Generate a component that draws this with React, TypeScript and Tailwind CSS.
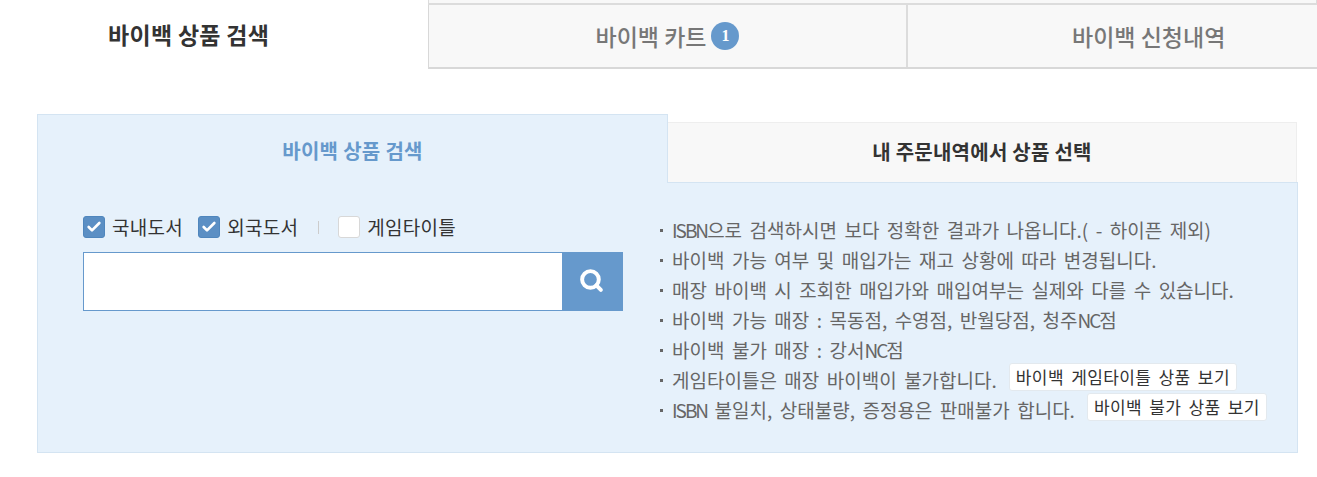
import { Check, Search } from "lucide-react";

const font = "font-['Noto_Sans_CJK_KR','Noto_Sans',sans-serif]";

function Box({ checked, label }: { checked?: boolean; label: string }) {
  return (
    <label className="flex items-center gap-[7px]">
      {checked ? (
        <span className="flex h-[22px] w-[22px] items-center justify-center rounded-[3px] border border-[#4f86bd] bg-[#5b8fc4] text-white">
          <Check size={16} strokeWidth={4} />
        </span>
      ) : (
        <span className="h-[22px] w-[22px] rounded-[3px] border border-[#d8d8d8] bg-white" />
      )}
      <span className="text-[19px] tracking-[0.3px] text-[#333]">{label}</span>
    </label>
  );
}

function Notice({ text, button }: { text: React.ReactNode; button?: string }) {
  return (
    <li className="flex h-[30px] items-center pl-[2px] text-[19px] text-[#666] [word-spacing:3.2px]">
      <span className="mr-[9px] h-[3px] w-[3px] bg-[#666]" />
      <span>{text}</span>
      {button && (
        <button className="-mt-[6px] ml-[12px] flex h-[28px] items-center rounded-[3px] border border-[#e3e9ee] bg-white px-[6px] text-[17px] tracking-[0.4px] text-[#333] [word-spacing:3px]">
          {button}
        </button>
      )}
    </li>
  );
}

function Latin({ children }: { children: string }) {
  return <span className="tracking-[-2px]">{children}</span>;
}

export default function App() {
  return (
    <main className={`h-[477px] w-[1317px] overflow-hidden bg-white ${font}`}>
      {/* top tabs */}
      <div className="flex h-[69px]">
        <div className="flex w-[428px] items-center pl-[108px] text-[23px] font-bold tracking-[0.3px] text-[#333]">
          바이백 상품 검색
        </div>
        <div className="flex flex-1 flex-col">
          <div className="h-[5px] border-x border-b-2 border-[#dcdcdc] bg-[#f8f8f8]" />
          <div className="flex flex-1 border-b-2 border-l border-[#d8d8d8] bg-[#f8f8f8] text-[23px] font-medium text-[#777]">
            <div className="flex w-[479px] items-center justify-center gap-[5px] border-r-2 border-[#dcdcdc]">
              바이백 카트
              <span className="flex h-[28px] w-[28px] items-center justify-center rounded-full bg-[#6699cc] font-['Liberation_Serif',serif] text-[16px] font-bold text-white">
                1
              </span>
            </div>
            <div className="flex flex-1 items-center pl-[164px]">바이백 신청내역</div>
          </div>
        </div>
      </div>

      <section className="mt-[44px] ml-[37px] w-[1261px]">
        {/* inner tabs */}
        <div className="flex h-[69px] items-end">
          <div className="z-10 -mb-px flex h-[69px] w-[631px] items-center justify-center border-x border-t border-[#d4e4f2] bg-[#e6f1fb] pt-[3px] text-[20px] font-bold tracking-[0.3px] text-[#6699cc]">
            바이백 상품 검색
          </div>
          <div className="flex h-[60px] w-[629px] items-center justify-center border-t border-r border-[#eeeeee] bg-[#f8f8f8] pb-[2px] text-[20px] font-bold tracking-[0.25px] text-[#333]">
            내 주문내역에서 상품 선택
          </div>
        </div>

        <div className="flex h-[271px] border border-[#d4e4f2] bg-[#e6f1fb]">
          <div className="w-[620px] pt-[33px] pl-[45px]">
            <div className="flex h-[22px] items-center">
              <Box checked label="국내도서" />
              <span className="w-[15px]" />
              <Box checked label="외국도서" />
              <span className="mr-[19px] ml-[20px] h-[13px] w-px bg-[#ccc]" />
              <Box label="게임타이틀" />
            </div>
            <div className="mt-[14px] flex h-[59px] w-[540px]">
              <input className="min-w-0 flex-1 border border-[#6699cc] bg-white outline-none" />
              <button className="flex w-[60px] items-center justify-center bg-[#6699cc] pr-[3px] pb-[3px] text-white">
                <Search size={25} strokeWidth={3.8} />
              </button>
            </div>
          </div>
          <ul className="pt-[32px]">
            <Notice text={<><Latin>ISBN</Latin>으로 검색하시면 보다 정확한 결과가 나옵니다.( - 하이픈 제외)</>} />
            <Notice text="바이백 가능 여부 및 매입가는 재고 상황에 따라 변경됩니다." />
            <Notice text="매장 바이백 시 조회한 매입가와 매입여부는 실제와 다를 수 있습니다." />
            <Notice text={<>바이백 가능 매장 : 목동점, 수영점, 반월당점, 청주<Latin>NC</Latin>점</>} />
            <Notice text={<>바이백 불가 매장 : 강서<Latin>NC</Latin>점</>} />
            <Notice text="게임타이틀은 매장 바이백이 불가합니다." button="바이백 게임타이틀 상품 보기" />
            <Notice text={<><Latin>ISBN</Latin> 불일치, 상태불량, 증정용은 판매불가 합니다.</>} button="바이백 불가 상품 보기" />
          </ul>
        </div>
      </section>
    </main>
  );
}
